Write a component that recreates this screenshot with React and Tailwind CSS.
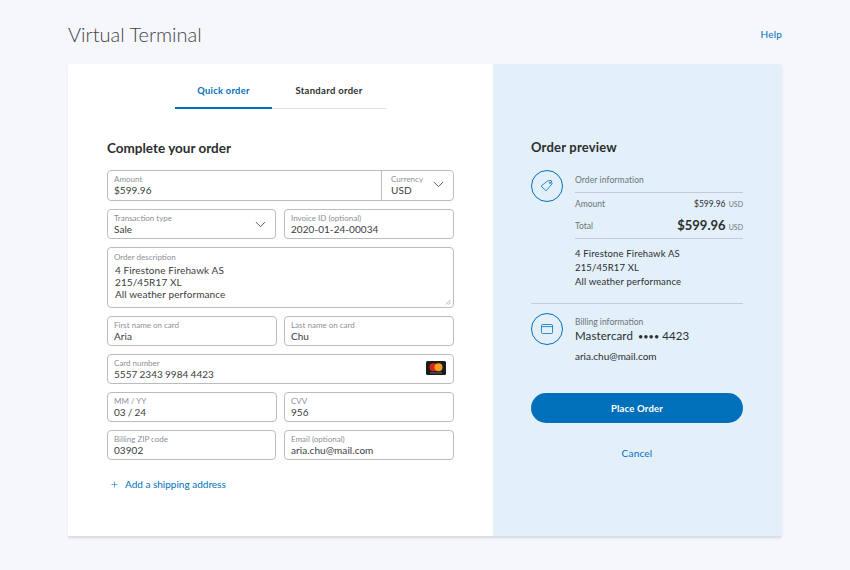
import { ChevronDown, Plus } from 'lucide-react';

function Field({ label, value, className = '', children }) {
  return (
    <div className={`relative h-[30px] rounded-[4px] border border-[#b9bdc1] bg-white pl-[6px] pt-[3px] ${className}`}>
      <div className="text-[8px] leading-[10px] text-[#8b9197]">{label}</div>
      <div className="text-[10px] leading-[13px] tracking-[0.05px] text-[#3a3d40] [word-spacing:-0.5px]">{value}</div>
      {children}
    </div>
  );
}

function Chevron({ className = '' }) {
  return <ChevronDown className={`absolute h-[17px] w-[17px] text-[#3a3d40] ${className}`} strokeWidth={1.2} />;
}

function Mastercard() {
  return (
    <svg className="absolute right-[7px] top-[6px]" width="20" height="14" viewBox="0 0 20 14">
      <rect width="20" height="14" rx="1.5" fill="#1c1c1e" />
      <circle cx="7.5" cy="6.2" r="4" fill="#e2231a" />
      <circle cx="12.5" cy="6.2" r="4" fill="#f79e1b" />
      <rect x="4" y="11.4" width="12" height="1" fill="#666" />
    </svg>
  );
}

export default function App() {
  return (
    <div className="h-[570px] w-[850px] overflow-hidden bg-[#f5f7fa] font-['Lato',sans-serif] text-[#2c2e2f]">
      <div className="flex h-[64px] items-start justify-between px-[68px] pt-[20px]">
        <h1 className="text-[20px] font-light leading-[28px] text-[#3f4448]">Virtual Terminal</h1>
        <a className="mt-[7px] text-[10px] leading-[14px] tracking-[0.2px] text-[#0070ba]">Help</a>
      </div>

      <div className="mx-[68px] flex h-[474px] w-[714px] overflow-hidden rounded-[2px] border-b-2 border-[#dcdfe3] bg-white shadow-[0_1px_3px_rgba(0,0,0,0.06)]">
        <div className="w-[425px] shrink-0 pl-[39px] pr-[39px]">
          <div className="ml-[68px] flex h-[45px] w-[211px] border-b border-[#dfe1e3]">
            <div className="mb-[-1px] w-[97px] border-b-2 border-[#0070ba] pt-[20px] text-center text-[9.3px] font-bold leading-[14px] tracking-[0.3px] text-[#0070ba]">Quick order</div>
            <div className="w-[114px] pt-[20px] text-center text-[9.5px] font-bold leading-[14px] tracking-[0.3px] text-[#2c2e2f]">Standard order</div>
          </div>

          <h2 className="mt-[30px] text-[13.5px] font-bold leading-[18px]">Complete your order</h2>

          <div className="mt-[13px] flex w-[347px] flex-col gap-[8px]">
            <div className="relative flex h-[31px] rounded-[4px] border border-[#b9bdc1] bg-white">
              <div className="flex-1 pl-[6px] pt-[3px]">
                <div className="text-[8px] leading-[10px] text-[#8b9197]">Amount</div>
                <div className="text-[10px] leading-[13px] tracking-[0.05px] text-[#3a3d40]">$599.96</div>
              </div>
              <div className="relative w-[72px] border-l border-[#b9bdc1] pl-[9px] pt-[3px]">
                <div className="text-[8px] leading-[10px] text-[#8b9197]">Currency</div>
                <div className="text-[10px] leading-[13px] tracking-[0.05px] text-[#3a3d40]">USD</div>
                <Chevron className="right-[6px] top-[5px]" />
              </div>
            </div>

            <div className="grid grid-cols-[169px_170px] gap-[8px]">
              <Field label="Transaction type" value="Sale">
                <Chevron className="right-[6px] top-[6px]" />
              </Field>
              <Field label="Invoice ID (optional)" value="2020-01-24-00034" />
            </div>

            <div className="relative h-[61px] rounded-[4px] border border-[#b9bdc1] bg-white pl-[6px] pt-[4px]">
              <div className="text-[8px] leading-[10px] text-[#8b9197]">Order description</div>
              <div className="mt-[2px] pl-[1px] text-[10px] leading-[12px] tracking-[0.1px] text-[#3a3d40]">
                <div>4 Firestone Firehawk AS</div>
                <div>215/45R17 XL</div>
                <div>All weather performance</div>
              </div>
              <svg className="absolute bottom-[2px] right-[2px]" width="6" height="6" viewBox="0 0 6 6" fill="none" stroke="#8b9197" strokeWidth="0.7">
                <path d="M1 5.5 5.5 1M3.5 5.5 5.5 3.5" />
              </svg>
            </div>

            <div className="grid grid-cols-[170px_170px] gap-[7px]">
              <Field label="First name on card" value="Aria" />
              <Field label="Last name on card" value="Chu" />
            </div>

            <Field label="Card number" value="5557 2343 9984 4423">
              <Mastercard />
            </Field>

            <div className="grid grid-cols-[170px_170px] gap-[7px]">
              <Field label="MM / YY" value="03 / 24" />
              <Field label="CVV" value="956" />
            </div>

            <div className="grid grid-cols-[169px_170px] gap-[8px]">
              <Field label="Billing ZIP code" value="03902" />
              <Field label="Email (optional)" value="aria.chu@mail.com" />
            </div>
          </div>

          <div className="mt-[16px] flex items-center pl-[3px] text-[10px] leading-[16px] text-[#0070ba]">
            <Plus className="h-[9px] w-[9px]" strokeWidth={1.5} />
            <span className="ml-[6px]">Add a shipping address</span>
          </div>
        </div>

        <div className="flex-1 bg-[#e3f0fa] pl-[38px] pr-[39px] pt-[74px]">
          <h2 className="text-[13px] font-bold leading-[18px] tracking-[0.2px] text-[#2c2e2f]">Order preview</h2>

          <div className="mt-[14px] flex">
            <div className="flex h-[32px] w-[32px] shrink-0 items-center justify-center rounded-full border border-[#0070ba]">
              <svg width="14" height="14" viewBox="0 0 14 14" fill="none" stroke="#0070ba" strokeWidth="0.8">
                <path d="M1 7.2 7.4 2l3.8-.6.8 3.4-5.8 7z" />
                <circle cx="10" cy="3.8" r="0.7" />
              </svg>
            </div>
            <div className="ml-[12px] flex-1">
              <div className="mt-[4px] h-[19px] border-b border-[#c3ccd4] text-[8.5px] leading-[12px] tracking-[0.1px] text-[#6c7378]">Order information</div>
              <div className="mt-[2px] flex h-[19px] items-center justify-between text-[8.5px] text-[#6c7378]">
                <span>Amount</span>
                <span className="text-[#2c2e2f]">$599.96 <span className="ml-[1px] text-[7px] text-[#6c7378]">USD</span></span>
              </div>
              <div className="flex h-[25px] items-center justify-between border-b border-[#c3ccd4] text-[8.5px] text-[#6c7378]">
                <span>Total</span>
                <span className="text-[13px] font-bold text-[#2c2e2f]">$599.96 <span className="text-[7px] font-normal text-[#6c7378]">USD</span></span>
              </div>
              <div className="mt-[8px] text-[9.5px] leading-[14px] tracking-[0.15px] text-[#2c2e2f]">
                <div>4 Firestone Firehawk AS</div>
                <div>215/45R17 XL</div>
                <div>All weather performance</div>
              </div>
            </div>
          </div>

          <div className="mt-[14px] border-t border-[#bcd0e0]" />

          <div className="mt-[9px] flex">
            <div className="flex h-[32px] w-[32px] shrink-0 items-center justify-center rounded-full border border-[#0070ba]">
              <svg width="14" height="12" viewBox="0 0 14 12" fill="none" stroke="#0070ba" strokeWidth="0.8">
                <rect x="1.5" y="1.5" width="11" height="9" rx="1" />
                <path d="M1.5 3.6h11" />
              </svg>
            </div>
            <div className="ml-[12px]">
              <div className="mt-[4px] text-[8.5px] leading-[11px] text-[#6c7378]">Billing information</div>
              <div className="text-[11.5px] leading-[15px] tracking-[0.1px]">Mastercard <span className="ml-[2px] text-[9px]">••••</span> 4423</div>
              <div className="mt-[5px] text-[10px] leading-[14px]">aria.chu@mail.com</div>
            </div>
          </div>

          <button className="mt-[30px] block h-[30px] w-[212px] rounded-full bg-[#0070ba] pt-[3px] text-center text-[9.5px] font-bold tracking-[0.2px] text-white">Place Order</button>
          <div className="mt-[23px] w-[212px] text-center text-[10px] leading-[14px] tracking-[0.2px] text-[#0070ba]">Cancel</div>
        </div>
      </div>
    </div>
  );
}
